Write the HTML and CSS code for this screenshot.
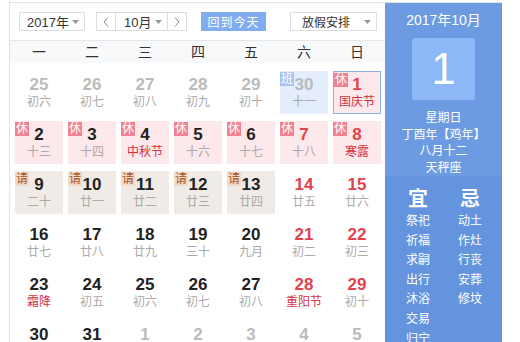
FILE: index.html
```html
<!DOCTYPE html>
<html lang="zh-CN">
<head>
    <meta charset="UTF-8">
    <title>万年历</title>
    <link rel="stylesheet" href="styles.css">
</head>
<body>
    <div class="calendar">
        <div class="main">
            <!-- top toolbar -->
            <div class="toolbar">
                <div class="select year-select">
                    <span>2017年</span>
                    <svg class="caret" width="7" height="4" viewBox="0 0 7 4"><path d="M0 0h7L3.5 4z" fill="#999"/></svg>
                </div>
                <div class="month-group">
                    <div class="arrow-btn">
                        <svg width="6" height="10" viewBox="0 0 6 10"><polyline points="5,0.5 1,5 5,9.5" fill="none" stroke="#888" stroke-width="1"/></svg>
                    </div>
                    <div class="select month-select">
                        <span>10月</span>
                        <svg class="caret" width="7" height="4" viewBox="0 0 7 4"><path d="M0 0h7L3.5 4z" fill="#999"/></svg>
                    </div>
                    <div class="arrow-btn">
                        <svg width="6" height="10" viewBox="0 0 6 10"><polyline points="1,0.5 5,5 1,9.5" fill="none" stroke="#888" stroke-width="1"/></svg>
                    </div>
                </div>
                <button class="today-btn">回到今天</button>
                <div class="select holiday-select">
                    <span>放假安排</span>
                    <svg class="caret" width="7" height="4" viewBox="0 0 7 4"><path d="M0 0h7L3.5 4z" fill="#999"/></svg>
                </div>
            </div>

            <div class="week-head">
                <span>一</span><span>二</span><span>三</span><span>四</span><span>五</span><span>六</span><span>日</span>
            </div>

            <div class="days">
                <div class="day other"><b>25</b><i>初六</i></div>
                <div class="day other"><b>26</b><i>初七</i></div>
                <div class="day other"><b>27</b><i>初八</i></div>
                <div class="day other"><b>28</b><i>初九</i></div>
                <div class="day other"><b>29</b><i>初十</i></div>
                <div class="day other work"><em>班</em><b>30</b><i>十一</i></div>
                <div class="day weekend rest today"><em>休</em><b>1</b><i class="fest">国庆节</i></div>

                <div class="day rest"><em>休</em><b>2</b><i>十三</i></div>
                <div class="day rest"><em>休</em><b>3</b><i>十四</i></div>
                <div class="day rest"><em>休</em><b>4</b><i class="fest">中秋节</i></div>
                <div class="day rest"><em>休</em><b>5</b><i>十六</i></div>
                <div class="day rest"><em>休</em><b>6</b><i>十七</i></div>
                <div class="day weekend rest"><em>休</em><b>7</b><i>十八</i></div>
                <div class="day weekend rest"><em>休</em><b>8</b><i class="fest">寒露</i></div>

                <div class="day leave"><em>请</em><b>9</b><i>二十</i></div>
                <div class="day leave"><em>请</em><b>10</b><i>廿一</i></div>
                <div class="day leave"><em>请</em><b>11</b><i>廿二</i></div>
                <div class="day leave"><em>请</em><b>12</b><i>廿三</i></div>
                <div class="day leave"><em>请</em><b>13</b><i>廿四</i></div>
                <div class="day weekend"><b>14</b><i>廿五</i></div>
                <div class="day weekend"><b>15</b><i>廿六</i></div>

                <div class="day"><b>16</b><i>廿七</i></div>
                <div class="day"><b>17</b><i>廿八</i></div>
                <div class="day"><b>18</b><i>廿九</i></div>
                <div class="day"><b>19</b><i>三十</i></div>
                <div class="day"><b>20</b><i>九月</i></div>
                <div class="day weekend"><b>21</b><i>初二</i></div>
                <div class="day weekend"><b>22</b><i>初三</i></div>

                <div class="day"><b>23</b><i class="fest">霜降</i></div>
                <div class="day"><b>24</b><i>初五</i></div>
                <div class="day"><b>25</b><i>初六</i></div>
                <div class="day"><b>26</b><i>初七</i></div>
                <div class="day"><b>27</b><i>初八</i></div>
                <div class="day weekend"><b>28</b><i class="fest">重阳节</i></div>
                <div class="day weekend"><b>29</b><i>初十</i></div>

                <div class="day"><b>30</b><i>十一</i></div>
                <div class="day"><b>31</b><i>十二</i></div>
                <div class="day other"><b>1</b><i>十三</i></div>
                <div class="day other"><b>2</b><i>十四</i></div>
                <div class="day other"><b>3</b><i>十五</i></div>
                <div class="day other"><b>4</b><i>十六</i></div>
                <div class="day other"><b>5</b><i>十七</i></div>
            </div>
        </div>

        <!-- selected day info -->
        <div class="side">
            <div class="side-top">
                <div class="side-month">2017年10月</div>
                <div class="side-day">1</div>
                <div class="side-info">
                    <p>星期日</p>
                    <p>丁酉年【鸡年】</p>
                    <p>八月十二</p>
                    <p>天秤座</p>
                </div>
            </div>
            <div class="side-bottom">
                <div class="yiji">
                    <h3>宜</h3>
                    <span>祭祀</span>
                    <span>祈福</span>
                    <span>求嗣</span>
                    <span>出行</span>
                    <span>沐浴</span>
                    <span>交易</span>
                    <span>归宁</span>
                </div>
                <div class="yiji">
                    <h3>忌</h3>
                    <span>动土</span>
                    <span>作灶</span>
                    <span>行丧</span>
                    <span>安葬</span>
                    <span>修坟</span>
                </div>
            </div>
        </div>
    </div>
</body>
</html>
```

FILE: styles.css
```css
html, body {
    height: 342px;
    overflow: hidden;
}

body {
    margin: 0;
    background-color: #fff;
    font-family: "Liberation Sans", "Noto Sans CJK SC", sans-serif;
    color: #333;
}

.calendar {
    display: flex;
    height: 340px;
    margin: 2px 0 0 9px;
    width: 493px;
    border-top: 1px solid #e3e3e3;
    border-left: 1px solid #e3e3e3;
    box-sizing: border-box;
}

.main {
    width: 375px;
    flex-shrink: 0;
}

/* toolbar */
.toolbar {
    display: flex;
    align-items: center;
    height: 38px;
    padding: 0 0 0 9px;
    border-bottom: 1px solid #e6e6e6;
    box-sizing: border-box;
    font-size: 13px;
}

.select {
    display: flex;
    align-items: center;
    justify-content: space-between;
    height: 19px;
    border: 1px solid #ddd;
    box-sizing: border-box;
    padding: 0 5px 0 7px;
    background: #fff;
}

.year-select {
    width: 66px;
}

.month-group {
    display: flex;
    margin-left: 11px;
}

.arrow-btn {
    display: flex;
    align-items: center;
    justify-content: center;
    width: 20px;
    height: 19px;
    border: 1px solid #ddd;
    box-sizing: border-box;
}

.month-select {
    width: 51px;
    border-left: none;
    border-right: none;
    padding-left: 8px;
}

.today-btn {
    width: 65px;
    height: 19px;
    margin-left: 14px;
    border: none;
    padding: 0;
    background-color: #82acf0;
    color: #fff;
    font-family: inherit;
    font-size: 12px;
    letter-spacing: 1px;
}

.holiday-select {
    width: 87px;
    margin-left: 24px;
    padding-left: 11px;
    font-size: 12px;
}

/* week header */
.week-head {
    display: grid;
    grid-template-columns: repeat(7, 48px);
    column-gap: 5px;
    padding-left: 5px;
    height: 22px;
    line-height: 22px;
    background-color: #f8f9fb;
    font-size: 14px;
    text-align: center;
    color: #333;
}

/* day grid */
.days {
    display: grid;
    grid-template-columns: repeat(7, 48px);
    grid-auto-rows: 43px;
    column-gap: 5px;
    row-gap: 7px;
    padding: 8px 0 0 5px;
}

.day {
    position: relative;
    text-align: center;
    box-sizing: border-box;
}

.day b {
    display: block;
    padding-top: 5px;
    font-size: 17px;
    line-height: 18px;
    color: #222;
}

.day i {
    display: block;
    font-style: normal;
    font-size: 12px;
    line-height: 16px;
    color: #aaa;
}

.day em {
    position: absolute;
    top: 1px;
    left: 0;
    width: 14px;
    height: 14px;
    line-height: 14px;
    font-style: normal;
    font-size: 12px;
    color: #fff;
}

.day.other b {
    color: #bbb;
}

.day.weekend b {
    color: #e2424e;
}

.day i.fest {
    color: #d2343f;
}

.rest {
    background-color: #fde8ec;
}

.rest em {
    background-color: #ef8391;
}

.work {
    background-color: #e4edfc;
}

.work em {
    background-color: #a7c3f2;
}

.leave {
    background-color: #f0ebe6;
}

.leave em {
    background-color: #f2dac6;
    color: #a5552a;
}

.today {
    border: 1px solid #8eafe6;
}

.today b {
    padding-top: 4px;
}

/* side panel */
.side {
    width: 117px;
    flex-shrink: 0;
    display: flex;
    flex-direction: column;
    background-color: #6d9be1;
    color: #fff;
}

.side-top {
    display: flex;
    flex-direction: column;
    align-items: center;
    height: 181px;
    padding-top: 8px;
    box-sizing: border-box;
}

.side-month {
    font-size: 14px;
    line-height: 18px;
}

.side-day {
    width: 63px;
    height: 62px;
    margin-top: 9px;
    border-radius: 3px;
    background-color: #8db7f7;
    font-size: 44px;
    line-height: 62px;
    text-align: center;
}

.side-info {
    margin-top: 10px;
    text-align: center;
    font-size: 12px;
    line-height: 16.5px;
}

.side-info p {
    margin: 0;
}

.side-bottom {
    flex: 1;
    display: grid;
    grid-template-columns: 52px 52px;
    padding: 12px 0 0 7px;
    background-color: #6494dd;
}

.yiji {
    display: flex;
    flex-direction: column;
    align-items: center;
    font-size: 12px;
    line-height: 19.6px;
}

.yiji h3 {
    margin: 0 0 2px;
    font-size: 20px;
    line-height: 22px;
    font-weight: bold;
}
```
